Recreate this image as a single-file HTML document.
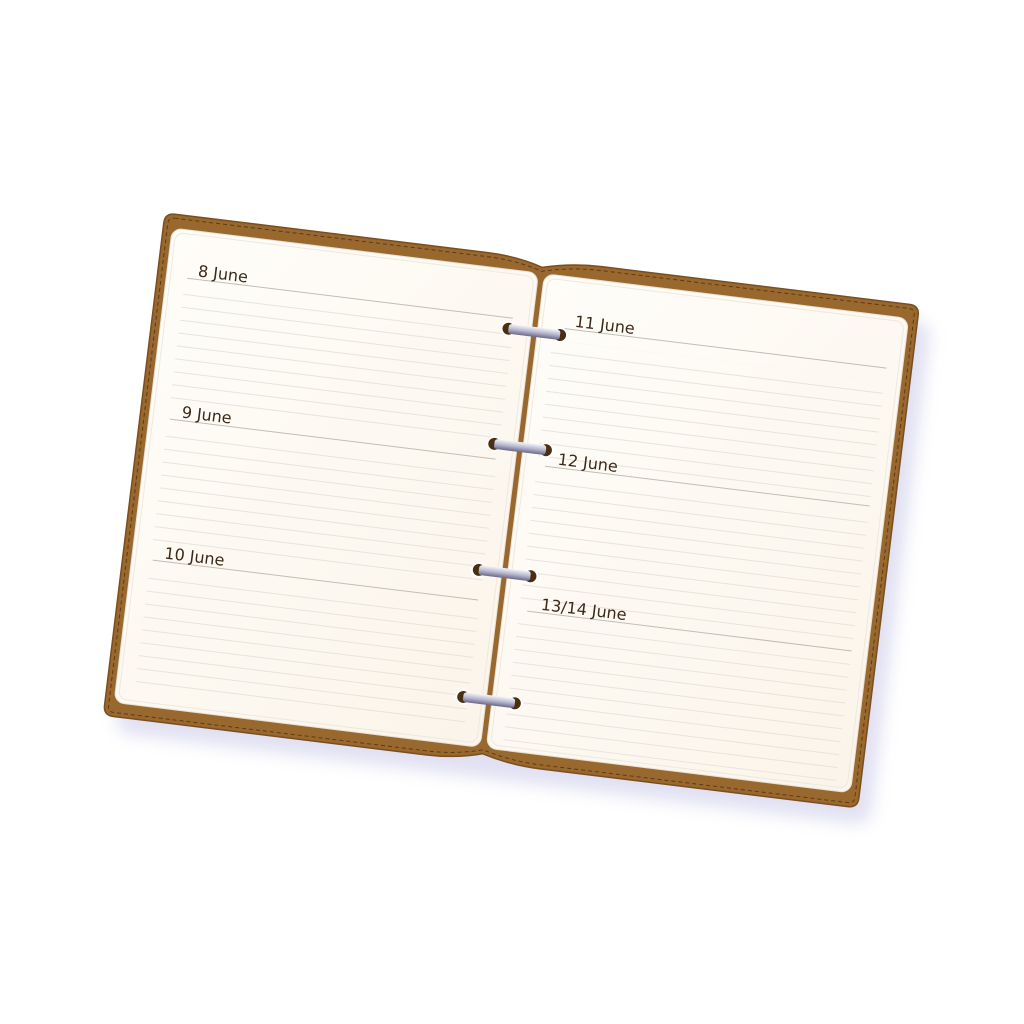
<!DOCTYPE html>
<html><head><style>html,body{margin:0;padding:0;background:#fff;width:1024px;height:1024px;overflow:hidden}</style></head>
<body>
<svg width="1024" height="1024" viewBox="0 0 1024 1024" xmlns="http://www.w3.org/2000/svg">
<defs>
<pattern id="rl" x="0" y="0" width="10" height="13" patternUnits="userSpaceOnUse">
<rect x="0" y="0" width="10" height="1" fill="#e8e3dc"/>
</pattern>
<linearGradient id="pg" x1="0" y1="0" x2="1" y2="1">
<stop offset="0" stop-color="#fffdf9"/><stop offset="1" stop-color="#fbf4ea"/>
</linearGradient>
<linearGradient id="ring" x1="0" y1="0" x2="0" y2="1">
<stop offset="0" stop-color="#f4f4fa"/><stop offset="0.5" stop-color="#b8b8d0"/><stop offset="1" stop-color="#6a6a88"/>
</linearGradient>
<filter id="sh" x="-10%" y="-10%" width="130%" height="130%"><feGaussianBlur stdDeviation="8"/></filter>
</defs>
<g transform="translate(165,213) rotate(7)">
<rect x="14" y="16" width="760" height="506" rx="14" fill="#c8c8e8" opacity="0.55" filter="url(#sh)"/>
<path d="M10,0 L325,0 Q355,0 381,8 Q410,0 440,0 L750,0 Q760,0 760,10 L760,496 Q760,506 750,506 L440,506 Q410,506 381,498 Q355,506 325,506 L10,506 Q0,506 0,496 L0,10 Q0,0 10,0 Z" fill="#98682e" stroke="#7a4e1e" stroke-width="1.5"/>
<path d="M10,4 L325,4 Q355,4 381,12 Q410,4 440,4 L750,4 Q756,4 756,10 L756,496 Q756,502 750,502 L440,502 Q410,502 381,494 Q355,502 325,502 L10,502 Q4,502 4,496 L4,10 Q4,4 10,4 Z" fill="none" stroke="#5e3a12" stroke-width="1" stroke-dasharray="4 3"/>
<rect x="9" y="14" width="369" height="478" rx="10" fill="url(#pg)" stroke="#e8e0d4"/>
<rect x="13" y="18" width="361" height="470" rx="8" fill="none" stroke="#efe8de"/>
<rect x="384" y="14" width="367" height="478" rx="10" fill="url(#pg)" stroke="#e8e0d4"/>
<rect x="388" y="18" width="359" height="470" rx="8" fill="none" stroke="#efe8de"/>
<rect x="28" y="75" width="332" height="118" fill="url(#rl)"/>
<rect x="28" y="217" width="332" height="118" fill="url(#rl)"/>
<rect x="28" y="359" width="332" height="120" fill="url(#rl)"/>
<rect x="400" y="79" width="335" height="118" fill="url(#rl)"/>
<rect x="400" y="218" width="335" height="124" fill="url(#rl)"/>
<rect x="400" y="364" width="335" height="118" fill="url(#rl)"/>
<g stroke="#c2bdb6" stroke-width="1">
<line x1="30" y1="62" x2="358" y2="62"/>
<line x1="30" y1="204" x2="358" y2="204"/>
<line x1="30" y1="346" x2="358" y2="346"/>
<line x1="408" y1="66" x2="735" y2="66"/>
<line x1="408" y1="205" x2="735" y2="205"/>
<line x1="408" y1="351" x2="735" y2="351"/>
</g>
<g font-family="DejaVu Sans, sans-serif" font-size="16" fill="#3a2a1a">
<text x="40" y="59">8 June</text>
<text x="41" y="201">9 June</text>
<text x="41" y="343">10 June</text>
<text x="420" y="63">11 June</text>
<text x="420" y="202">12 June</text>
<text x="421" y="348">13/14 June</text>
</g>
<g>
<g transform="translate(381,73)"><circle cx="-26" cy="0" r="7" fill="#4a2e10" stroke="#fff" stroke-width="2"/><circle cx="26" cy="0" r="7" fill="#4a2e10" stroke="#fff" stroke-width="2"/><rect x="-26" y="-5" width="52" height="10" rx="3" fill="url(#ring)"/></g>
<g transform="translate(381,189)"><circle cx="-26" cy="0" r="7" fill="#4a2e10" stroke="#fff" stroke-width="2"/><circle cx="26" cy="0" r="7" fill="#4a2e10" stroke="#fff" stroke-width="2"/><rect x="-26" y="-5" width="52" height="10" rx="3" fill="url(#ring)"/></g>
<g transform="translate(381,316)"><circle cx="-26" cy="0" r="7" fill="#4a2e10" stroke="#fff" stroke-width="2"/><circle cx="26" cy="0" r="7" fill="#4a2e10" stroke="#fff" stroke-width="2"/><rect x="-26" y="-5" width="52" height="10" rx="3" fill="url(#ring)"/></g>
<g transform="translate(381,444)"><circle cx="-26" cy="0" r="7" fill="#4a2e10" stroke="#fff" stroke-width="2"/><circle cx="26" cy="0" r="7" fill="#4a2e10" stroke="#fff" stroke-width="2"/><rect x="-26" y="-5" width="52" height="10" rx="3" fill="url(#ring)"/></g>
</g>
</g>
</svg>
</body></html>
